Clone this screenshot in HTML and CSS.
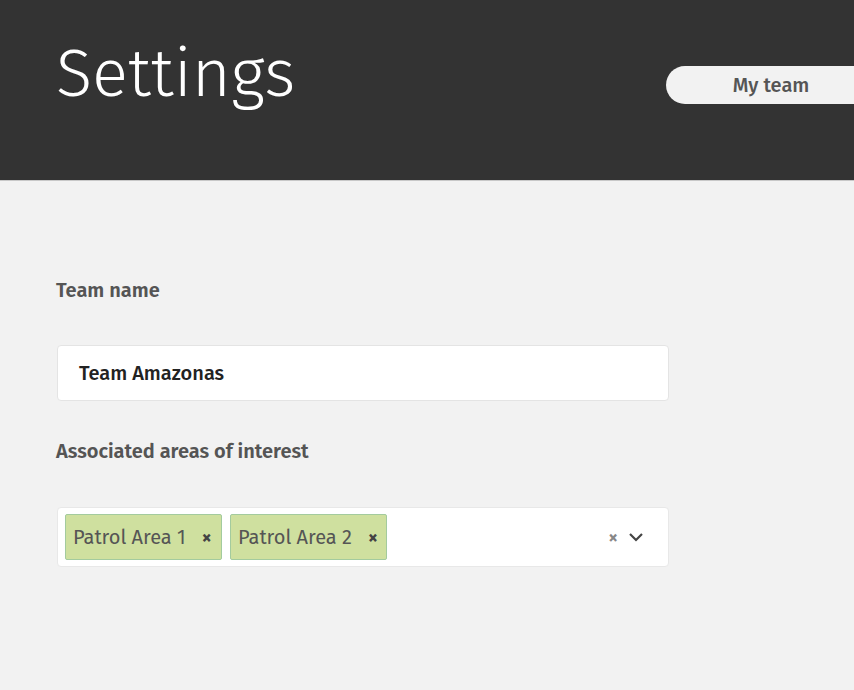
FILE: index.html
```html
<!DOCTYPE html>
<html lang="en">
<head>
<meta charset="utf-8">
<title>Settings</title>
<link rel="stylesheet" href="styles.css">
</head>
<body>
<header class="header">
  <h1 class="title">Settings</h1>
  <nav class="tabs">
    <span class="tab">My team</span>
  </nav>
</header>
<main class="content">
  <form class="form">
    <label class="label" for="team-name">Team name</label>
    <div class="input">
      <span id="team-name" class="input-value">Team Amazonas</span>
    </div>
    <label class="label label-areas">Associated areas of interest</label>
    <div class="select">
      <div class="tags">
        <span class="tag">Patrol Area 1<span class="tag-x">×</span></span>
        <span class="tag">Patrol Area 2<span class="tag-x">×</span></span>
      </div>
      <div class="select-icons">
        <span class="clear">×</span>
        <svg class="chevron" width="16" height="10" viewBox="0 0 16 10"><path d="M2 2 L8 8 L14 2" fill="none" stroke="#444" stroke-width="2.2"/></svg>
      </div>
    </div>
  </form>
</main>
</body>
</html>
```

FILE: styles.css
```css
* { box-sizing: border-box; }
html, body { margin: 0; padding: 0; }
body {
  font-family: "Fira Sans", "Open Sans", "Noto Sans", sans-serif;
  background: #f2f2f2;
  width: 854px;
  height: 690px;
  overflow: hidden;
}
.header {
  background: #333333;
  height: 181px;
  display: flex;
  align-items: flex-start;
  justify-content: space-between;
  padding: 29px 0 0 56px;
  border-bottom: 1px solid #c8c8c8;
}
.title {
  margin: 0;
  color: #ffffff;
  font-weight: 300;
  font-size: 67px;
  line-height: 90px;
  letter-spacing: 0;
}
.tabs {
  margin-top: 37px;
  display: flex;
}
.tab {
  display: block;
  width: 188px;
  height: 38px;
  background: #f2f2f2;
  border-radius: 19px 0 0 19px;
  color: #555555;
  font-weight: 500;
  font-size: 20px;
  line-height: 38px;
  text-align: center;
  padding-left: 22px;
}
.content {
  padding: 97px 0 0 57px;
}
.form {
  width: 612px;
  display: flex;
  flex-direction: column;
}
.label {
  display: block;
  color: #555555;
  font-weight: 600;
  font-size: 20px;
  line-height: 24px;
  margin-left: -1px;
  margin-bottom: 43px;
}
.label-areas {
  margin-bottom: 44px;
}
.input {
  background: #ffffff;
  border: 1px solid #e4e4e4;
  border-radius: 4px;
  height: 56px;
  display: flex;
  align-items: center;
  padding-left: 21px;
  margin-bottom: 38px;
}
.input-value {
  color: #222222;
  font-weight: 500;
  font-size: 20px;
}
.select {
  background: #ffffff;
  border: 1px solid #e8e8e8;
  border-radius: 4px;
  height: 60px;
  display: flex;
  align-items: center;
  justify-content: space-between;
  padding: 0 24px 0 7px;
}
.tags {
  display: flex;
  gap: 8px;
}
.tag {
  display: flex;
  align-items: center;
  height: 46px;
  width: 157px;
  padding-left: 7px;
  background: #cfe09f;
  border: 1px solid #a3cb9e;
  border-radius: 2px;
  color: #555555;
  font-size: 20px;
}
.tag-x {
  margin-left: 16px;
  font-weight: 700;
  font-size: 19px;
  color: #444;
}
.select-icons {
  display: flex;
  align-items: center;
  gap: 10px;
}
.clear {
  color: #888;
  font-size: 19px;
  font-weight: 600;
}
.chevron { display: block; }
```
